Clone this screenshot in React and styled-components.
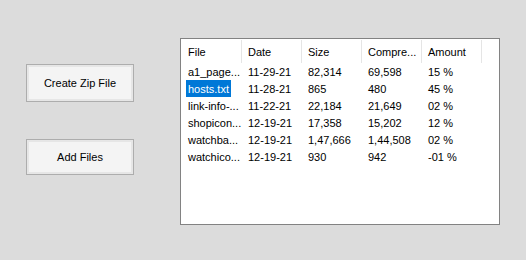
import React from "react";
import styled, { createGlobalStyle } from "styled-components";

const Global = createGlobalStyle`
  html, body { margin: 0; padding: 0; background: #dcdcdc; }
  body { font-family: "Liberation Sans", Arial, sans-serif; font-size: 11px; color: #000; }
`;

const Window = styled.div`
  width: 526px;
  height: 260px;
  background: #dcdcdc;
  display: flex;
  align-items: flex-start;
  box-sizing: border-box;
`;

const ButtonColumn = styled.div`
  display: flex;
  flex-direction: column;
  gap: 37px;
  padding: 64px 0 0 26px;
`;

const Button = styled.button`
  box-sizing: border-box;
  width: 108px;
  height: ${(p) => p.$height || 38}px;
  margin: 0;
  padding: 0;
  border: 1px solid #adadad;
  background: #f4f4f4;
  box-shadow: inset 0 0 0 2px #e6e6e6;
  font-family: "Liberation Sans", Arial, sans-serif;
  font-size: 11px;
  color: #000;
  display: flex;
  align-items: center;
  justify-content: center;
`;

const ListBox = styled.div`
  box-sizing: border-box;
  margin: 38px 0 0 46px;
  width: 320px;
  height: 187px;
  border: 1px solid #828282;
  background: #fff;
  display: flex;
  flex-direction: column;
`;

const HeaderRow = styled.div`
  display: flex;
  height: 24px;
  padding-left: 1px;
`;

const HeaderCell = styled.div`
  box-sizing: border-box;
  width: 60px;
  margin-top: 1px;
  border-right: 1px solid #e5e5e5;
  padding: 1px 0 0 6px;
  display: flex;
  align-items: center;
  white-space: nowrap;
  overflow: hidden;
`;

const Row = styled.div`
  display: flex;
  height: 17px;
`;

const Cell = styled.div`
  box-sizing: border-box;
  width: 60px;
  padding-left: ${(p) => (p.$first ? 5 : 7)}px;
  padding-top: 1px;
  display: flex;
  align-items: center;
  white-space: nowrap;
  overflow: hidden;
`;

const Label = styled.span`
  display: flex;
  align-items: center;
  height: 17px;
  margin-top: -2px;
  padding: 1px 2px 0;
  box-sizing: border-box;
  background: ${(p) => (p.$selected ? "#0078d7" : "transparent")};
  color: ${(p) => (p.$selected ? "#fff" : "#000")};
`;

const columns = ["File", "Date", "Size", "Compre...", "Amount"];

const rows = [
  ["a1_page...", "11-29-21", "82,314", "69,598", "15 %"],
  ["hosts.txt", "11-28-21", "865", "480", "45 %"],
  ["link-info-...", "11-22-21", "22,184", "21,649", "02 %"],
  ["shopicon...", "12-19-21", "17,358", "15,202", "12 %"],
  ["watchba...", "12-19-21", "1,47,666", "1,44,508", "02 %"],
  ["watchico...", "12-19-21", "930", "942", "-01 %"],
];

export default function App() {
  return (
    <>
      <Global />
      <Window>
        <ButtonColumn>
          <Button>Create Zip File</Button>
          <Button $height={36}>Add Files</Button>
        </ButtonColumn>
        <ListBox>
          <HeaderRow>
            {columns.map((c) => (
              <HeaderCell key={c}>{c}</HeaderCell>
            ))}
          </HeaderRow>
          {rows.map((r, ri) => (
            <Row key={ri}>
              {r.map((v, ci) =>
                ci === 0 ? (
                  <Cell key={ci} $first>
                    <Label $selected={ri === 1}>{v}</Label>
                  </Cell>
                ) : (
                  <Cell key={ci}>{v}</Cell>
                )
              )}
            </Row>
          ))}
        </ListBox>
      </Window>
    </>
  );
}
